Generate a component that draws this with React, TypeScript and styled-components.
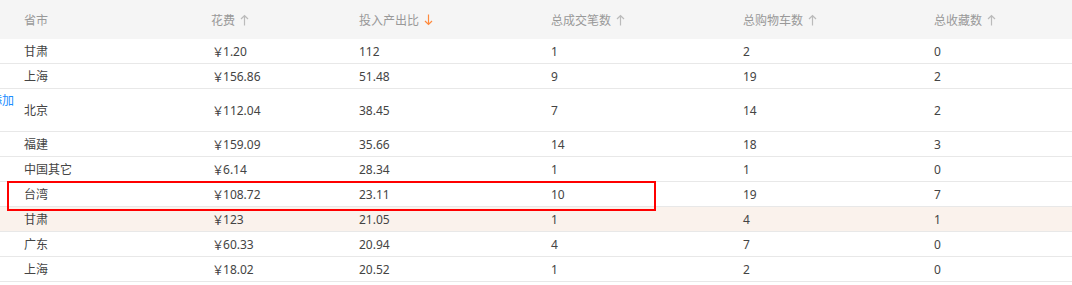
import { FC } from "react";
import styled, { createGlobalStyle } from "styled-components";

type SortDir = "asc" | "desc";

interface IColumn {
  key: string;
  title: string;
  sort?: SortDir;
  active?: boolean;
}

interface IRow {
  province: string;
  cost: string;
  roi: string;
  deals: number;
  carts: number;
  favs: number;
  tall?: boolean;
  hovered?: boolean;
}

const columns: IColumn[] = [
  { key: "province", title: "省市" },
  { key: "cost", title: "花费", sort: "asc" },
  { key: "roi", title: "投入产出比", sort: "desc", active: true },
  { key: "deals", title: "总成交笔数", sort: "asc" },
  { key: "carts", title: "总购物车数", sort: "asc" },
  { key: "favs", title: "总收藏数", sort: "asc" },
];

const rows: IRow[] = [
  { province: "甘肃", cost: "1.20", roi: "112", deals: 1, carts: 2, favs: 0 },
  { province: "上海", cost: "156.86", roi: "51.48", deals: 9, carts: 19, favs: 2 },
  { province: "北京", cost: "112.04", roi: "38.45", deals: 7, carts: 14, favs: 2, tall: true },
  { province: "福建", cost: "159.09", roi: "35.66", deals: 14, carts: 18, favs: 3 },
  { province: "中国其它", cost: "6.14", roi: "28.34", deals: 1, carts: 1, favs: 0 },
  { province: "台湾", cost: "108.72", roi: "23.11", deals: 10, carts: 19, favs: 7 },
  { province: "甘肃", cost: "123", roi: "21.05", deals: 1, carts: 4, favs: 1, hovered: true },
  { province: "广东", cost: "60.33", roi: "20.94", deals: 4, carts: 7, favs: 0 },
  { province: "上海", cost: "18.02", roi: "20.52", deals: 1, carts: 2, favs: 0 },
];

const GlobalStyle = createGlobalStyle`
  html, body {
    margin: 0;
    padding: 0;
    background: #fff;
    overflow: hidden;
  }

  body {
    font-family: "Noto Sans", "Noto Sans CJK SC", sans-serif;
    font-size: 12px;
    color: #444;
  }
`;

const SortArrow: FC<{ dir: SortDir; active?: boolean }> = ({ dir, active }) => (
  <ArrowIcon
    width="9"
    height="12"
    viewBox="0 0 9 12"
    $active={active}
    style={{ transform: dir === "desc" ? "rotate(180deg)" : undefined }}
  >
    <path d="M4.5 1.5v10M1 5l3.5-3.5L8 5" fill="none" stroke="currentColor" strokeWidth="1.2" />
  </ArrowIcon>
);

const App: FC = () => (
  <>
    <GlobalStyle />
    <TableWrapper>
      <AddLink>添加</AddLink>
      <HeaderRow>
        {columns.map((col) => (
          <HeaderCell key={col.key}>
            {col.title}
            {col.sort && <SortArrow dir={col.sort} active={col.active} />}
          </HeaderCell>
        ))}
      </HeaderRow>
      {rows.map((row, i) => (
        <BodyRow key={i} $tall={row.tall} $hovered={row.hovered}>
          <Cell>{row.province}</Cell>
          <Cell>
            <Currency>￥</Currency>
            {row.cost}
          </Cell>
          <Cell>{row.roi}</Cell>
          <Cell>{row.deals}</Cell>
          <Cell>{row.carts}</Cell>
          <Cell>{row.favs}</Cell>
        </BodyRow>
      ))}
      <Highlight />
    </TableWrapper>
  </>
);

export default App;

const gridColumns = "195px 148px 192px 192px 191px 1fr";

const TableWrapper = styled.div`
  position: relative;
  width: 1072px;
`;

const HeaderRow = styled.div`
  display: grid;
  grid-template-columns: ${gridColumns};
  height: 39px;

  background-color: #f5f5f5;
`;

const HeaderCell = styled.div`
  display: flex;
  align-items: center;
  gap: 5px;

  padding-left: 16px;

  color: #999;

  &:first-child {
    padding-left: 24px;
  }
`;

const ArrowIcon = styled.svg<{ $active?: boolean }>`
  display: block;
  color: ${({ $active }) => ($active ? "#ff8a3d" : "#bbb")};
`;

const BodyRow = styled.div<{ $tall?: boolean; $hovered?: boolean }>`
  display: grid;
  grid-template-columns: ${gridColumns};
  height: ${({ $tall }) => ($tall ? 42 : 24)}px;

  background-color: ${({ $hovered }) => ($hovered ? "#faf2ec" : "#fff")};
  border-bottom: 1px solid #e8e8e8;
`;

const Cell = styled.div`
  display: flex;
  align-items: center;

  padding-left: 16px;

  &:first-child {
    padding-left: 24px;
  }
`;

const Currency = styled.span`
  font-family: "Noto Sans CJK SC", sans-serif;
  margin-left: 1px;
  margin-right: -1px;
`;

const AddLink = styled.span`
  position: absolute;
  top: 93px;
  left: -10px;

  color: #1a8cff;
  line-height: 16px;
`;

const Highlight = styled.div`
  position: absolute;
  top: 181px;
  left: 7px;
  width: 649px;
  height: 30px;
  box-sizing: border-box;

  border: 2px solid #f00;
  pointer-events: none;
`;
